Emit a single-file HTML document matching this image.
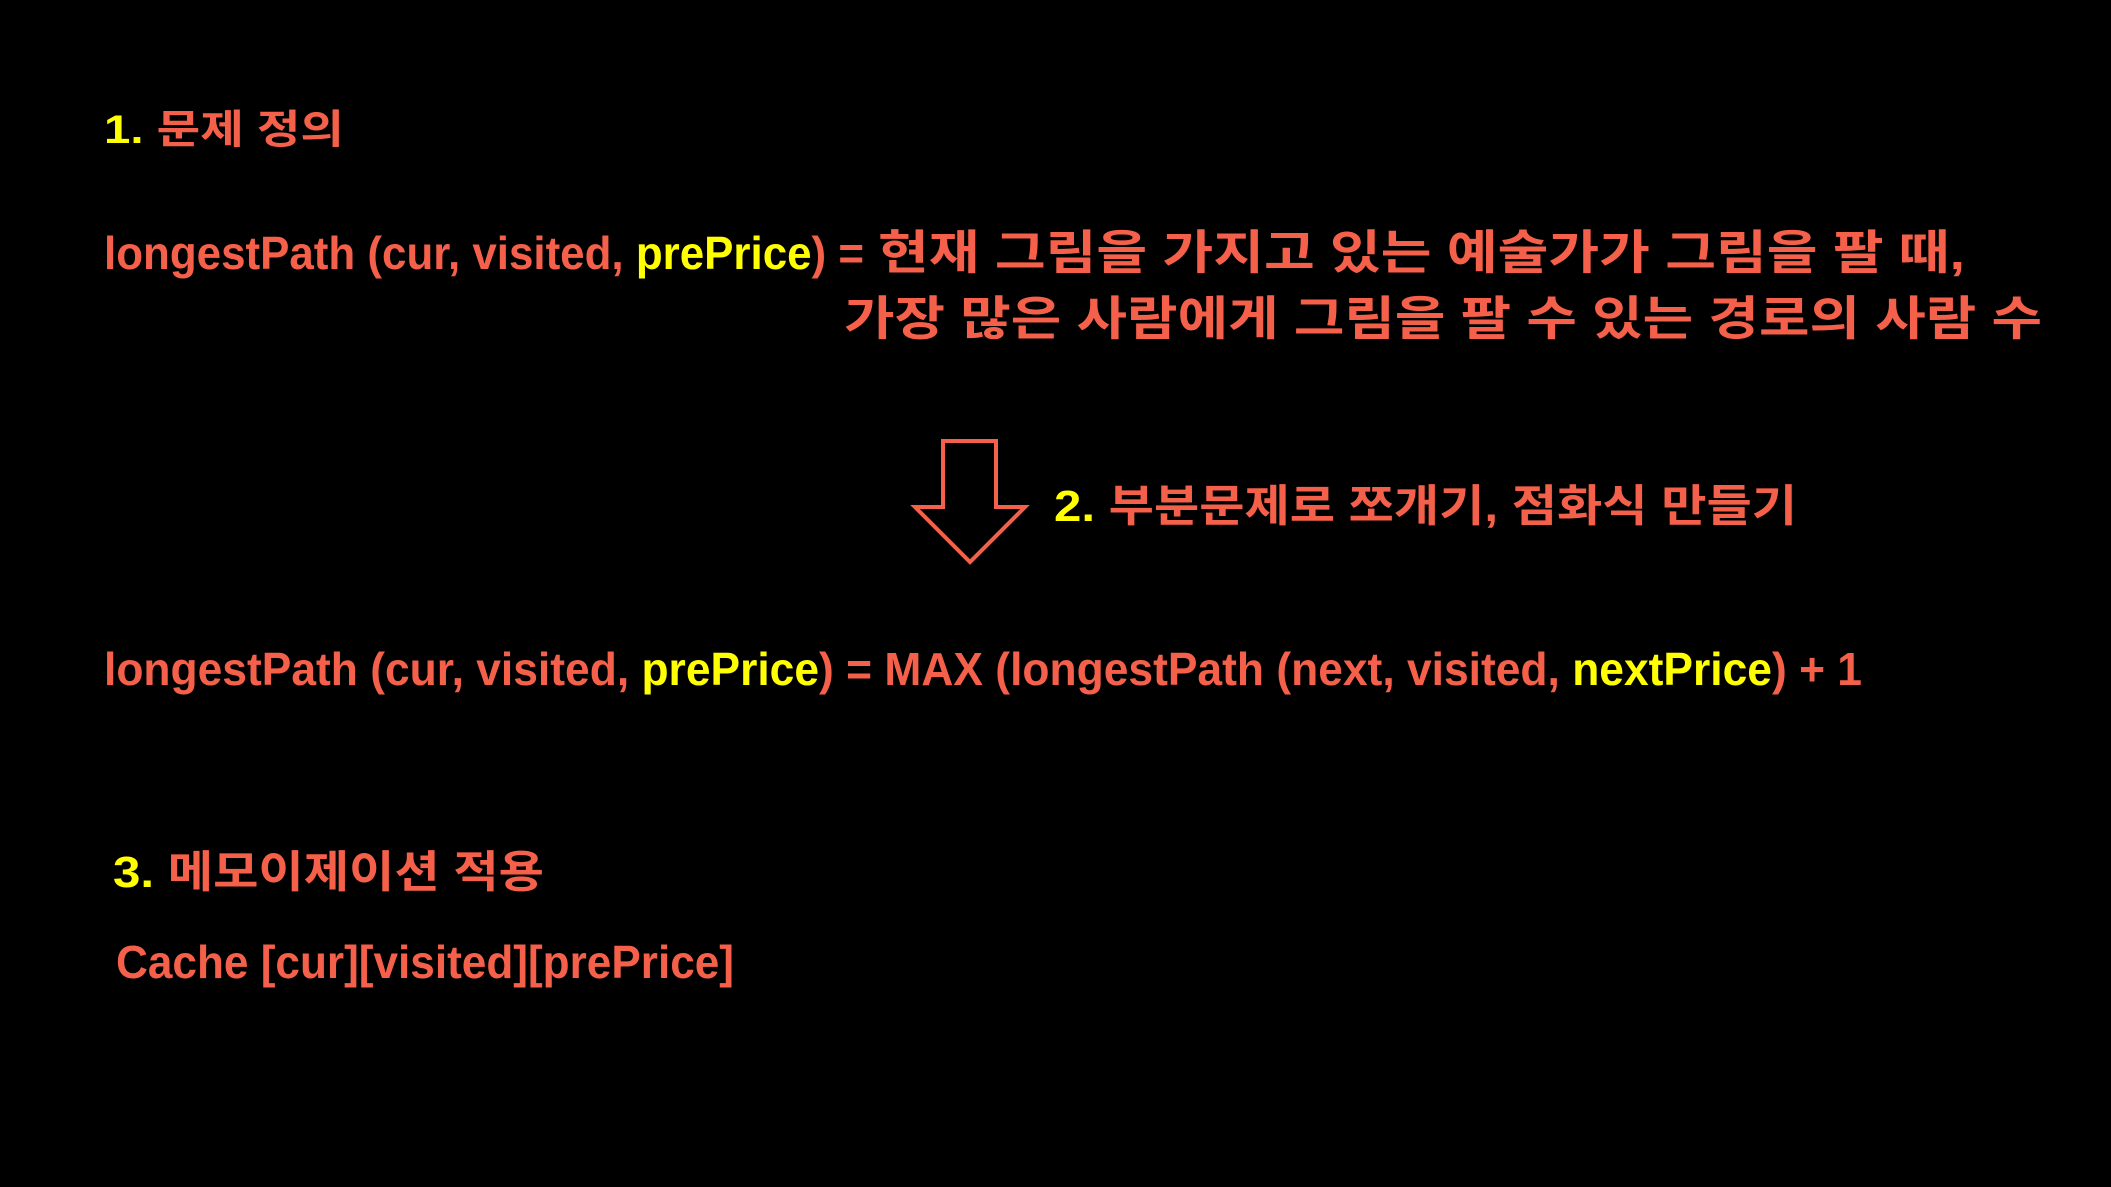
<!DOCTYPE html>
<html><head><meta charset="utf-8"><style>
html,body{margin:0;padding:0;background:#000;width:2111px;height:1187px;overflow:hidden}
svg{display:block}
text{font-family:"Liberation Sans","Noto Sans CJK KR",sans-serif;font-weight:bold;fill:#f5604a}
.y{fill:#ffff00}
</style></head><body>
<svg width="2111" height="1187" viewBox="0 0 2111 1187">
<text x="104" y="143" font-size="40" textLength="240" lengthAdjust="spacingAndGlyphs"><tspan class="y">1. </tspan>문제 정의</text>
<text x="104" y="269" font-size="46" textLength="760" lengthAdjust="spacingAndGlyphs">longestPath (cur, visited, <tspan class="y">prePrice</tspan>) =</text>
<text x="878" y="269" font-size="47" textLength="1087" lengthAdjust="spacingAndGlyphs">현재 그림을 가지고 있는 예술가가 그림을 팔 때,</text>
<text x="844" y="335" font-size="47" textLength="1198" lengthAdjust="spacingAndGlyphs">가장 많은 사람에게 그림을 팔 수 있는 경로의 사람 수</text>
<polygon points="943,441 996,441 996,507 1025,507 970,562 915,507 943,507" fill="none" stroke="#f5604a" stroke-width="4"/>
<text x="1054" y="521" font-size="44" textLength="743" lengthAdjust="spacingAndGlyphs"><tspan class="y">2. </tspan>부분문제로 쪼개기, 점화식 만들기</text>
<text x="104" y="685" font-size="46" textLength="1758" lengthAdjust="spacingAndGlyphs">longestPath (cur, visited, <tspan class="y">prePrice</tspan>) = MAX (longestPath (next, visited, <tspan class="y">nextPrice</tspan>) + 1</text>
<text x="113" y="887" font-size="44" textLength="431" lengthAdjust="spacingAndGlyphs"><tspan class="y">3. </tspan>메모이제이션 적용</text>
<text x="116" y="978" font-size="46" textLength="618" lengthAdjust="spacingAndGlyphs">Cache [cur][visited][prePrice]</text>
</svg>
</body></html>
